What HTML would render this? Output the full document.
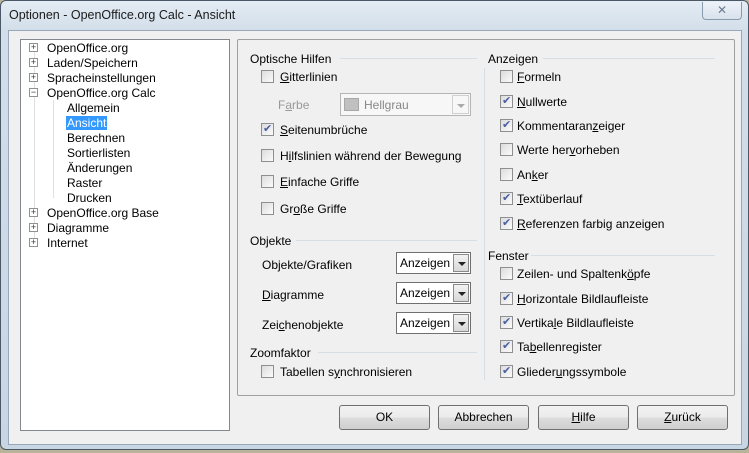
<!DOCTYPE html>
<html><head><meta charset="utf-8"><style>
*{box-sizing:border-box;margin:0;padding:0}
body{width:749px;height:453px;overflow:hidden;background:#b8b49a;font-family:"Liberation Sans",sans-serif;font-size:12px;color:#000;position:relative}
.win{position:absolute;left:0;top:0;width:749px;height:450px;border-radius:6px;background:linear-gradient(180deg,#e4ecf4 0,#d2dee9 30px,#c8d6e4 100%);border:1px solid #4a5868}
.title{position:absolute;left:8px;top:7px;font-size:12.5px;color:#1a1a1a}
.close{position:absolute;left:701px;top:1px;width:40px;height:18px;border:1px solid #8a9aae;border-top:none;border-radius:0 0 4px 4px;background:linear-gradient(#eef3f8,#d8e2ed);text-align:center;font-size:12px;color:#6a7a8e;line-height:16px}
.client{position:absolute;left:7px;top:29px;width:734px;height:415px;background:#f0f0f0;border:1px solid #98a8bb}
.a{position:absolute;white-space:nowrap;margin-top:1px}
.tree{position:absolute;left:20px;top:39px;width:210px;height:392px;background:#fff;border:1px solid #828790}
.pl{position:absolute;width:9px;height:9px;border:1px solid #919191;background:#fff;font-size:9px;line-height:7px;text-align:center;color:#333}
.panel{position:absolute;left:237px;top:39px;width:498px;height:357px;border:1px solid #a0a0a0;border-radius:2px}
.cb{position:absolute;width:13px;height:13px;border:1px solid #8e8f8f;background:linear-gradient(135deg,#dcdcdc,#fbfbfb);}
.cb.c::after{content:"✔";position:absolute;left:1px;top:-2px;font-size:11px;color:#4a5fa0}
.hl{position:absolute;height:1px;background:#d5dfe5}
.dd{position:absolute;width:75px;height:22px;border:1px solid #707070;background:#fff;padding:3px 0 0 3px}
.dd i{position:absolute;right:1px;top:1px;width:16px;height:18px;border:1px solid #8a8a8a;background:linear-gradient(#f2f2f2,#d8d8d8)}
.dd i::after{content:"";position:absolute;left:4px;top:7px;border:4px solid transparent;border-top:4px solid #222}
.btn{position:absolute;top:405px;width:91px;height:25px;border:1px solid #707070;border-radius:3px;background:linear-gradient(#f2f2f2 0,#ebebeb 50%,#dddddd 51%,#cfcfcf 100%);text-align:center;line-height:23px}
u{text-decoration:underline}
</style></head><body>
<div class="win">
<div class="title">Optionen - OpenOffice.org Calc - Ansicht</div>
<div class="close">✕</div>
<div class="client"></div>
</div>
<div class="tree">
<div style="position:absolute;left:13px;top:12px;width:1px;height:195px;background:#e0e0e0"></div>
<div style="position:absolute;left:32px;top:60px;width:1px;height:98px;background:#e0e0e0"></div>
</div>
<div class="pl" style="left:29px;top:43px">+</div><div class="a" style="left:47px;top:40px">OpenOffice.org</div>
<div class="pl" style="left:29px;top:58px">+</div><div class="a" style="left:47px;top:55px">Laden/Speichern</div>
<div class="pl" style="left:29px;top:73px">+</div><div class="a" style="left:47px;top:70px">Spracheinstellungen</div>
<div class="pl" style="left:29px;top:88px">−</div><div class="a" style="left:47px;top:85px">OpenOffice.org Calc</div>
<div class="a" style="left:67px;top:100px">Allgemein</div>
<div class="a" style="left:66px;top:115px;background:#3399ff;color:#fff;padding:0 1px">Ansicht</div>
<div class="a" style="left:67px;top:130px">Berechnen</div>
<div class="a" style="left:67px;top:145px">Sortierlisten</div>
<div class="a" style="left:67px;top:160px">Änderungen</div>
<div class="a" style="left:67px;top:175px">Raster</div>
<div class="a" style="left:67px;top:190px">Drucken</div>
<div class="pl" style="left:29px;top:208px">+</div><div class="a" style="left:47px;top:205px">OpenOffice.org Base</div>
<div class="pl" style="left:29px;top:223px">+</div><div class="a" style="left:47px;top:220px">Diagramme</div>
<div class="pl" style="left:29px;top:238px">+</div><div class="a" style="left:47px;top:235px">Internet</div>

<div class="panel"></div>
<div style="position:absolute;left:484px;top:68px;width:1px;height:312px;background:#d5dfe5"></div>

<div class="a" style="left:250px;top:51px">Optische Hilfen</div><div class="hl" style="left:340px;top:58px;width:137px"></div>
<div class="cb" style="left:261px;top:70px"></div><div class="a" style="left:280px;top:69px"><u>G</u>itterlinien</div>
<div class="a" style="left:278px;top:97px;color:#999">F<u>a</u>rbe</div>
<div style="position:absolute;left:340px;top:93px;width:131px;height:23px;border:1px solid #b5b5b5;background:#f7f7f7"><div style="position:absolute;left:3px;top:4px;width:15px;height:13px;background:#c0c0c0;border:1px solid #a8a8a8"></div><div class="a" style="left:23px;top:3px;color:#888">Hellgrau</div><div style="position:absolute;right:1px;top:1px;width:17px;height:19px;border:1px solid #d0d0d0;background:#f7f7f7"><div style="position:absolute;left:4px;top:8px;border:4px solid transparent;border-top:4px solid #aaa"></div></div></div>
<div class="cb c" style="left:261px;top:123px"></div><div class="a" style="left:280px;top:122px"><u>S</u>eitenumbrüche</div>
<div class="cb" style="left:261px;top:149px"></div><div class="a" style="left:280px;top:148px">H<u>i</u>lfslinien während der Bewegung</div>
<div class="cb" style="left:261px;top:175px"></div><div class="a" style="left:280px;top:174px"><u>E</u>infache Griffe</div>
<div class="cb" style="left:261px;top:202px"></div><div class="a" style="left:280px;top:201px">Gr<u>o</u>ße Griffe</div>

<div class="a" style="left:250px;top:233px">Objekte</div><div class="hl" style="left:296px;top:240px;width:181px"></div>
<div class="a" style="left:262px;top:257px">Objekte/Grafiken</div><div class="dd" style="left:396px;top:252px">Anzeigen<i></i></div>
<div class="a" style="left:262px;top:287px"><u>D</u>iagramme</div><div class="dd" style="left:396px;top:282px">Anzeigen<i></i></div>
<div class="a" style="left:262px;top:317px">Zei<u>c</u>henobjekte</div><div class="dd" style="left:396px;top:312px">Anzeigen<i></i></div>
<div class="a" style="left:250px;top:345px">Zoomfaktor</div><div class="hl" style="left:318px;top:352px;width:159px"></div>
<div class="cb" style="left:261px;top:365px"></div><div class="a" style="left:280px;top:364px">Tabellen s<u>y</u>nchronisieren</div>

<div class="a" style="left:488px;top:51px">Anzeigen</div><div class="hl" style="left:543px;top:58px;width:172px"></div>
<div class="cb" style="left:500px;top:70px"></div><div class="a" style="left:517px;top:69px"><u>F</u>ormeln</div>
<div class="cb c" style="left:500px;top:95px"></div><div class="a" style="left:517px;top:94px"><u>N</u>ullwerte</div>
<div class="cb c" style="left:500px;top:119px"></div><div class="a" style="left:517px;top:118px">Kommentaran<u>z</u>eiger</div>
<div class="cb" style="left:500px;top:143px"></div><div class="a" style="left:517px;top:142px">Werte her<u>v</u>orheben</div>
<div class="cb" style="left:500px;top:168px"></div><div class="a" style="left:517px;top:167px">An<u>k</u>er</div>
<div class="cb c" style="left:500px;top:192px"></div><div class="a" style="left:517px;top:191px"><u>T</u>extüberlauf</div>
<div class="cb c" style="left:500px;top:217px"></div><div class="a" style="left:517px;top:216px"><u>R</u>eferenzen farbig anzeigen</div>

<div class="a" style="left:488px;top:248px">Fenster</div><div class="hl" style="left:531px;top:255px;width:184px"></div>
<div class="cb" style="left:500px;top:267px"></div><div class="a" style="left:517px;top:266px">Zeilen- und Spaltenk<u>ö</u>pfe</div>
<div class="cb c" style="left:500px;top:292px"></div><div class="a" style="left:517px;top:291px"><u>H</u>orizontale Bildlaufleiste</div>
<div class="cb c" style="left:500px;top:316px"></div><div class="a" style="left:517px;top:315px">Vertika<u>l</u>e Bildlaufleiste</div>
<div class="cb c" style="left:500px;top:340px"></div><div class="a" style="left:517px;top:339px">Ta<u>b</u>ellenregister</div>
<div class="cb c" style="left:500px;top:365px"></div><div class="a" style="left:517px;top:364px">Glieder<u>u</u>ngssymbole</div>

<div class="btn" style="left:339px">OK</div>
<div class="btn" style="left:438px">Abbrechen</div>
<div class="btn" style="left:538px"><u>H</u>ilfe</div>
<div class="btn" style="left:637px"><u>Z</u>urück</div>
</body></html>
